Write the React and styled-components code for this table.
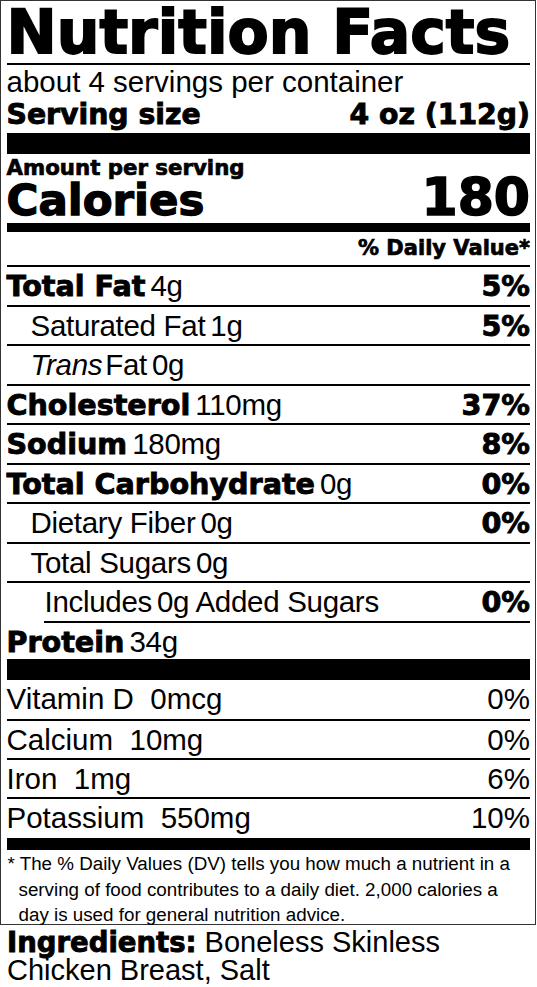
import React from 'react';
import styled, { createGlobalStyle } from 'styled-components';

const GlobalStyle = createGlobalStyle`
  html, body {
    margin: 0;
    padding: 0;
    background: #fff;
  }
  body {
    font-family: "Liberation Sans", Arial, sans-serif;
    color: #000;
  }
`;

// heavy face used for all the bold label text
const heavy = `
  font-family: "DejaVu Sans", "Liberation Sans", sans-serif;
  font-weight: 700;
`;

const nutrients = [
  { name: 'Total Fat', amount: '4g', dv: '5%', bold: true },
  { name: 'Saturated Fat', amount: '1g', dv: '5%', indent: 24 },
  { name: 'Fat', trans: true, amount: '0g', indent: 24 },
  { name: 'Cholesterol', amount: '110mg', dv: '37%', bold: true },
  { name: 'Sodium', amount: '180mg', dv: '8%', bold: true },
  { name: 'Total Carbohydrate', amount: '0g', dv: '0%', bold: true },
  { name: 'Dietary Fiber', amount: '0g', dv: '0%', indent: 24 },
  { name: 'Total Sugars', amount: '0g', indent: 24 },
  { name: 'Includes', amount: '0g Added Sugars', dv: '0%', inset: 37, indent: 1 },
];

const vitamins = [
  { name: 'Vitamin D', amount: '0mcg', dv: '0%' },
  { name: 'Calcium', amount: '10mg', dv: '0%' },
  { name: 'Iron', amount: '1mg', dv: '6%' },
  { name: 'Potassium', amount: '550mg', dv: '10%' },
];

const App = () => {
  return (
    <>
      <GlobalStyle />
      <Label>
        <Title>Nutrition Facts</Title>
        <Servings>about 4 servings per container</Servings>
        <ServingSize>
          <span>Serving size</span>
          <span>4 oz (112g)</span>
        </ServingSize>
        <Bar $h={21} />

        <Amount>Amount per serving</Amount>
        <CaloriesRow>
          <span>Calories</span>
          <Big>180</Big>
        </CaloriesRow>
        <Bar $h={9} />

        <DvHeader>% Daily Value*</DvHeader>

        {nutrients.map((item, index) => (
          <Row key={index} $inset={item.inset || 0} $indent={item.indent || 0}>
            <Name>
              {item.trans && <Italic>Trans</Italic>}
              {item.bold ? <Strong>{item.name}</Strong> : item.name}
              <Value>{item.amount}</Value>
            </Name>
            {item.dv && <Pct>{item.dv}</Pct>}
          </Row>
        ))}
        <Row $last>
          <Name>
            <Strong>Protein</Strong>
            <Value>34g</Value>
          </Name>
        </Row>
        <Bar $h={21} />

        {vitamins.map((item, index) => (
          <VitaminRow key={index} $first={index === 0}>
            <span>{item.name}  {item.amount}</span>
            <span>{item.dv}</span>
          </VitaminRow>
        ))}
        <Bar $h={12} />

        <Footnote>
          * The % Daily Values (DV) tells you how much a nutrient in a serving of food contributes to a daily diet. 2,000 calories a day is used for general nutrition advice.
        </Footnote>
      </Label>

      <Ingredients>
        <Strong>Ingredients:</Strong> Boneless Skinless Chicken Breast, Salt
      </Ingredients>
    </>
  );
};

const Label = styled.section`
  width: 536px;
  box-sizing: border-box;
  border: 1.5px solid #333;
  padding: 0 5px 0 5.5px;
`;

const Title = styled.h1`
  ${heavy}
  margin: 0;
  height: 62px;
  line-height: 62px;
  font-size: 60px;
  -webkit-text-stroke: 1.8px #000;
  white-space: nowrap;
  border-bottom: 2px solid #000;
`;

const Servings = styled.div`
  height: 33px;
  line-height: 34px;
  font-size: 29.5px;
  white-space: nowrap;
`;

const ServingSize = styled.div`
  ${heavy}
  display: flex;
  justify-content: space-between;
  height: 33px;
  line-height: 33px;
  font-size: 28.3px;
  -webkit-text-stroke: 0.9px #000;
  white-space: nowrap;
`;

const Bar = styled.div`
  height: ${({ $h }) => $h}px;
  background: #000;
  margin-top: 2px;
`;

const Amount = styled.div`
  ${heavy}
  padding-top: 3px;
  height: 22px;
  line-height: 22px;
  font-size: 21.3px;
  -webkit-text-stroke: 0.7px #000;
`;

const CaloriesRow = styled.div`
  ${heavy}
  display: flex;
  justify-content: space-between;
  align-items: baseline;
  height: 42px;
  line-height: 36px;
  font-size: 43.5px;
  -webkit-text-stroke: 1.3px #000;
`;

const Big = styled.span`
  font-size: 52px;
  -webkit-text-stroke: 1.6px #000;
`;

const DvHeader = styled.div`
  ${heavy}
  text-align: right;
  height: 33px;
  line-height: 33px;
  font-size: 21px;
  -webkit-text-stroke: 0.7px #000;
  border-bottom: 2px solid #000;
`;

const Row = styled.div`
  display: flex;
  justify-content: space-between;
  align-items: baseline;
  line-height: 37.5px;
  font-size: 29.5px;
  white-space: nowrap;
  margin-left: ${({ $inset }) => $inset}px;
  padding-left: ${({ $indent }) => $indent}px;
  border-bottom: ${({ $last }) => ($last ? 'none' : '2px solid #000')};
  height: ${({ $last }) => ($last ? '34.5px' : '37.5px')};
`;

const Name = styled.span`
  display: flex;
  align-items: baseline;
  letter-spacing: -0.3px;
`;

const Strong = styled.span`
  ${heavy}
  font-size: 28.6px;
  letter-spacing: 0;
  -webkit-text-stroke: 0.9px #000;
`;

const Italic = styled.i`
  margin-right: 3px;
`;

const Value = styled.span`
  margin-left: 5px;
`;

const Pct = styled.span`
  ${heavy}
  font-size: 28.6px;
  -webkit-text-stroke: 0.9px #000;
`;

const VitaminRow = styled.div`
  display: flex;
  justify-content: space-between;
  line-height: 37px;
  font-size: 29.5px;
  white-space: pre;
  border-top: ${({ $first }) => ($first ? 'none' : '2px solid #000')};
  height: ${({ $first }) => ($first ? '39px' : '37px')};
`;

const Footnote = styled.p`
  margin: 0;
  height: 73px;
  padding: 1px 0 0 12px;
  text-indent: -11px;
  font-size: 18.8px;
  line-height: 25.5px;
`;

const Ingredients = styled.p`
  margin: 4px 0 0;
  padding: 0 0 0 7px;
  font-size: 29px;
  line-height: 27.5px;

  ${Strong} {
    font-size: 27.5px;
  }
`;

export default App;
